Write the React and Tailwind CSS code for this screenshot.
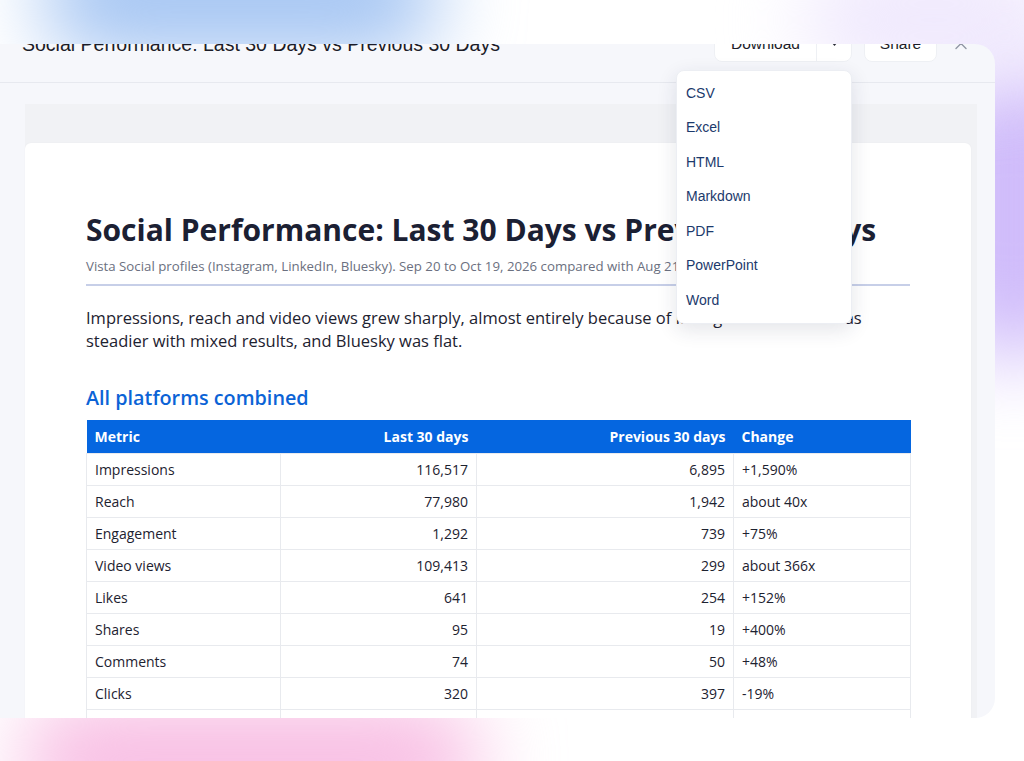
import { ChevronUp } from 'lucide-react';

const rows = [
  ['Impressions', '116,517', '6,895', '+1,590%'],
  ['Reach', '77,980', '1,942', 'about 40x'],
  ['Engagement', '1,292', '739', '+75%'],
  ['Video views', '109,413', '299', 'about 366x'],
  ['Likes', '641', '254', '+152%'],
  ['Shares', '95', '19', '+400%'],
  ['Comments', '74', '50', '+48%'],
  ['Clicks', '320', '397', '-19%'],
  ['\u00a0', '\u00a0', '\u00a0', '\u00a0'],
];

const formats = ['CSV', 'Excel', 'HTML', 'Markdown', 'PDF', 'PowerPoint', 'Word'];

const DownloadMenu = () => (
  <div className="absolute right-0 top-full z-20 mt-[8px] w-[176px] rounded-lg border border-[#eceef3] bg-white py-[5px] shadow-[0_6px_20px_rgba(30,40,70,0.12)]">
    {formats.map((f) => (
      <div key={f} className="flex h-[34.5px] items-center px-[9px] text-[14px] text-[#1c3a6c]">
        {f}
      </div>
    ))}
  </div>
);

const Header = () => (
  <div className="-mt-[20px] flex items-center justify-between border-b border-[#e7e9ef] pb-[20px] pl-[22px] pr-[24px] pt-[2px] font-['Liberation_Sans',Arial,sans-serif]">
    <h2 className="text-[19.5px] leading-[24px] text-[#1b1c28]">
      Social Performance: Last 30 Days vs Previous 30 Days
    </h2>
    <div className="flex h-[36px] items-center">
      <div className="relative flex h-full">
        <div className="flex h-full items-stretch overflow-hidden rounded-lg border border-[#eef0f4] bg-white text-[15.5px] text-[#1b1c28]">
          <button className="w-[102px] border-r border-[#eef0f4]">Download</button>
          <button className="flex w-[34px] items-center justify-center">
            <svg width="7" height="4" viewBox="0 0 7 4">
              <path d="M0 0h7L3.5 4z" fill="#2a2c36" />
            </svg>
          </button>
        </div>
        <DownloadMenu />
      </div>
      <button className="ml-[12px] h-full w-[73px] rounded-lg border border-[#eef0f4] bg-white text-[15.5px] text-[#1b1c28]">
        Share
      </button>
      <ChevronUp className="ml-[14px] mt-[4px] text-[#9096a3]" size={20} strokeWidth={1.6} />
    </div>
  </div>
);

const StatsTable = () => (
  <table className="w-[824px] table-fixed border-collapse text-[14px] text-[#1d2230]">
    <colgroup>
      <col className="w-[194px]" />
      <col className="w-[196px]" />
      <col className="w-[257px]" />
      <col className="w-[177px]" />
    </colgroup>
    <thead>
      <tr className="bg-[#0566e0] text-white">
        <th className="px-[8px] py-[6px] text-left font-bold leading-[21px]">Metric</th>
        <th className="px-[8px] py-[6px] text-right font-bold leading-[21px]">Last 30 days</th>
        <th className="px-[8px] py-[6px] text-right font-bold leading-[21px]">Previous 30 days</th>
        <th className="px-[8px] py-[6px] text-left font-bold leading-[21px]">Change</th>
      </tr>
    </thead>
    <tbody>
      {rows.map((r, i) => (
        <tr key={i}>
          <td className="border border-[#e8eaee] px-[8px] py-[6px] leading-[19px]">{r[0]}</td>
          <td className="border border-[#e8eaee] px-[8px] py-[6px] text-right leading-[19px]">{r[1]}</td>
          <td className="border border-[#e8eaee] px-[8px] py-[6px] text-right leading-[19px]">{r[2]}</td>
          <td className="border border-[#e8eaee] px-[8px] py-[6px] leading-[19px]">{r[3]}</td>
        </tr>
      ))}
    </tbody>
  </table>
);

export default function App() {
  return (
    <div className="relative h-[761px] w-full overflow-hidden bg-white">
      {/* soft background glows */}
      <div className="absolute -top-[70px] left-[40px] h-[130px] w-[400px] rounded-full bg-[#a6c6f3] blur-[40px]" />
      <div className="absolute -right-[60px] top-[60px] h-[300px] w-[140px] rounded-full bg-[#cdb8fa] blur-[40px]" />
      <div className="absolute -right-[40px] -top-[40px] h-[120px] w-[260px] rounded-full bg-[#efe8fd] blur-[40px]" />
      <div className="absolute -bottom-[60px] left-[20px] h-[120px] w-[460px] rounded-full bg-[#f8bde3] blur-[40px]" />

      <div className="relative z-10 flex h-full flex-col">
        <div className="h-[44px] shrink-0" />
        <div className="flex h-[674px] w-[995px] flex-col overflow-hidden rounded-r-[20px] bg-[#f6f7fb]">
          <Header />
          <div className="ml-[25px] mr-[18px] mt-[21px] flex-1 bg-[#f1f2f5] pr-[6px] pt-[39px]">
            <div className="h-full rounded-t-[6px] bg-white px-[61px] pt-[68px] font-['Open_Sans',sans-serif] shadow-[0_0_2px_rgba(0,0,0,0.04)]">
              <h1 className="text-[30px] font-bold leading-[38px] text-[#1b2033]">
                Social Performance: Last 30 Days vs Previous 30 Days
              </h1>
              <p className="mt-[8px] border-b-2 border-[#c7cfe8] pb-[9px] text-[13.25px] leading-[18px] text-[#6b7080]">
                Vista Social profiles (Instagram, LinkedIn, Bluesky). Sep 20 to Oct 19, 2026 compared with Aug 21 to Sep 19, 2026.
              </p>
              <p className="mt-[20px] text-[16.5px] leading-[23px] text-[#1d2230]">
                Impressions, reach and video views grew sharply, almost entirely because of Instagram. LinkedIn was steadier with mixed results, and Bluesky was flat.
              </p>
              <h3 className="mb-[8px] mt-[32px] text-[19.8px] font-semibold leading-[28px] text-[#0b63d6]">
                All platforms combined
              </h3>
              <StatsTable />
            </div>
          </div>
        </div>
      </div>
    </div>
  );
}
